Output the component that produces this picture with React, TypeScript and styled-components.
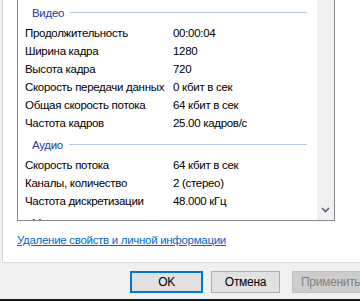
import React from "react";
import styled, { createGlobalStyle } from "styled-components";

const Global = createGlobalStyle`
  html, body { margin: 0; padding: 0; width: 360px; height: 301px; overflow: hidden; background: #f0f0f0; }
  * { box-sizing: border-box; }
`;

const FONT = `"Liberation Sans", Arial, sans-serif`;

const Dialog = styled.div`
  width: 360px;
  height: 301px;
  background: #f0f0f0;
  display: flex;
  flex-direction: column;
  overflow: hidden;
  font-family: ${FONT};
  font-size: 11.5px;
  letter-spacing: -0.3px;
  color: #000;
`;

const TabPanel = styled.div`
  margin-left: 2px;
  width: 420px;
  height: 263px;
  flex: none;
  background: #fff;
  border-left: 1px solid #d9d9d9;
  border-bottom: 1px solid #d9d9d9;
  padding-left: 14px;
  display: flex;
  flex-direction: column;
`;

const ListBox = styled.div`
  width: 318px;
  height: 221px;
  border: 1px solid #828790;
  border-top: none;
  display: flex;
`;

const ListContent = styled.div`
  flex: 1;
  overflow: hidden;
  display: flex;
  flex-direction: column;
`;

const GroupHeader = styled.div`
  flex: none;
  height: 24px;
  padding: 2px 10px 0 14px;
  display: flex;
  align-items: center;
  gap: 6px;
  color: #1e3c9a;
  line-height: 22px;
  &::after {
    content: "";
    flex: 1;
    height: 1px;
    background: #b3c6e7;
    margin-top: -1px;
  }
`;

const Row = styled.div`
  flex: none;
  height: 18px;
  line-height: 18px;
  padding-left: 7px;
  display: flex;
  white-space: nowrap;
`;

const Name = styled.span`
  width: 148px;
  flex: none;
`;

const Value = styled.span``;

const ScrollBar = styled.div`
  width: 17px;
  flex: none;
  background: #f0f0f0;
  display: flex;
  flex-direction: column;
  justify-content: flex-end;
  align-items: center;
  padding-bottom: 7px;
`;

const LinkRow = styled.div`
  margin-top: 11px;
  line-height: 16px;
  height: 16px;
`;

const Link = styled.a`
  color: #0066cc;
  text-decoration: underline;
  cursor: pointer;
`;

const ButtonRow = styled.div`
  margin-top: 8px;
  padding-left: 130px;
  display: flex;
  height: 22px;
  flex: none;
`;

const Button = styled.div<{ $w: number; $variant?: "default" | "normal" | "disabled"; $gap?: number }>`
  width: ${(p) => p.$w}px;
  flex: none;
  height: 22px;
  margin-right: ${(p) => p.$gap ?? 0}px;
  display: flex;
  align-items: center;
  justify-content: ${(p) => (p.$variant === "disabled" ? "flex-start" : "center")};
  padding-left: ${(p) => (p.$variant === "disabled" ? "8px" : "0")};
  white-space: nowrap;
  overflow: hidden;
  line-height: 1;
  font-size: 12px;
  background: ${(p) => (p.$variant === "disabled" ? "#cccccc" : "#e1e1e1")};
  color: ${(p) => (p.$variant === "disabled" ? "#838383" : "#000")};
  border: ${(p) =>
    p.$variant === "default"
      ? "2px solid #0078d7"
      : p.$variant === "disabled"
      ? "1px solid #bfbfbf"
      : "1px solid #adadad"};
`;

const Spacer = styled.div`
  flex: 1;
`;

const BottomBar = styled.div`
  height: 2px;
  flex: none;
  background: #1a1a1a;
`;

const Chevron = () => (
  <svg width="9" height="6" viewBox="0 0 9 6">
    <path d="M1 1 L4.5 4.5 L8 1" fill="none" stroke="#606060" strokeWidth="1.6" />
  </svg>
);

type Item = { kind: "h"; text: string } | { kind: "r"; name: string; value: string };

const items: Item[] = [
  { kind: "h", text: "Видео" },
  { kind: "r", name: "Продолжительность", value: "00:00:04" },
  { kind: "r", name: "Ширина кадра", value: "1280" },
  { kind: "r", name: "Высота кадра", value: "720" },
  { kind: "r", name: "Скорость передачи данных", value: "0 кбит в сек" },
  { kind: "r", name: "Общая скорость потока", value: "64 кбит в сек" },
  { kind: "r", name: "Частота кадров", value: "25.00 кадров/с" },
  { kind: "h", text: "Аудио" },
  { kind: "r", name: "Скорость потока", value: "64 кбит в сек" },
  { kind: "r", name: "Каналы, количество", value: "2 (стерео)" },
  { kind: "r", name: "Частота дискретизации", value: "48.000 кГц" },
  { kind: "h", text: "Медиа" },
];

export default function App() {
  return (
    <>
      <Global />
      <Dialog>
        <TabPanel>
          <ListBox>
            <ListContent>
              {items.map((it, i) =>
                it.kind === "h" ? (
                  <GroupHeader key={i}>{it.text}</GroupHeader>
                ) : (
                  <Row key={i}>
                    <Name>{it.name}</Name>
                    <Value>{it.value}</Value>
                  </Row>
                )
              )}
            </ListContent>
            <ScrollBar>
              <Chevron />
            </ScrollBar>
          </ListBox>
          <LinkRow>
            <Link>Удаление свойств и личной информации</Link>
          </LinkRow>
        </TabPanel>
        <ButtonRow>
          <Button $w={73} $gap={8} $variant="default">OK</Button>
          <Button $w={69} $gap={12} $variant="normal">Отмена</Button>
          <Button $w={75} $variant="disabled">Применить</Button>
        </ButtonRow>
        <Spacer />
        <BottomBar />
      </Dialog>
    </>
  );
}
